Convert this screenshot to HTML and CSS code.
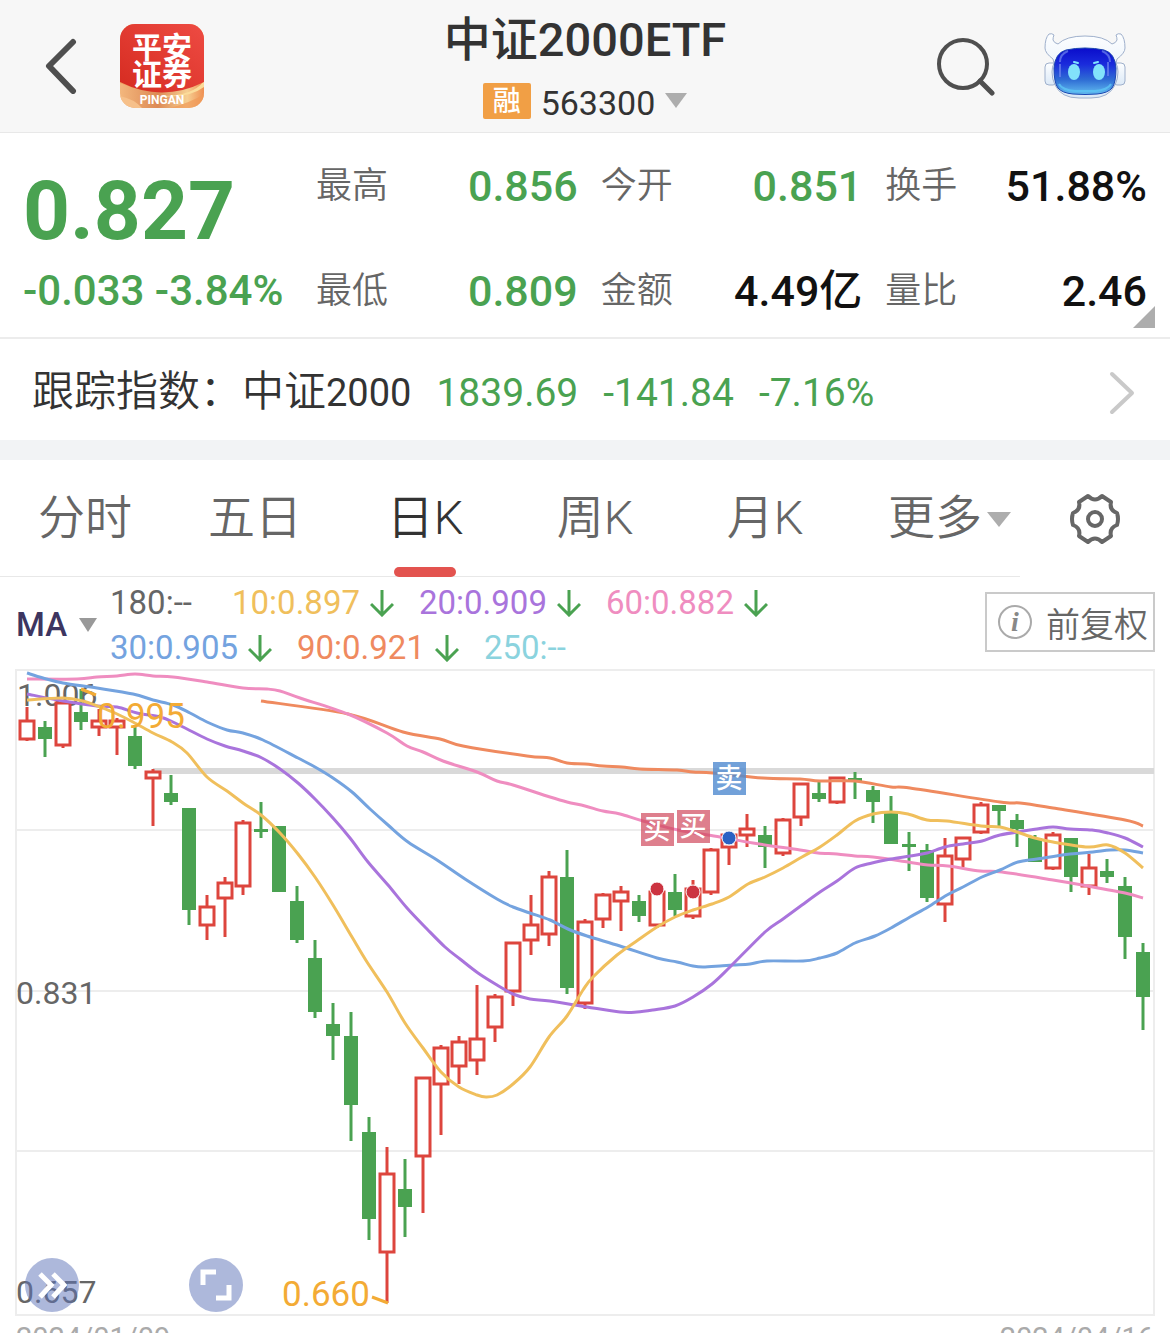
FILE: index.html
```html
<!DOCTYPE html>
<html lang="zh-CN">
<head>
<meta charset="utf-8">
<meta name="viewport" content="width=device-width, initial-scale=1">
<title>中证2000ETF 563300</title>
<link rel="stylesheet" href="styles.css">
</head>
<body>
<header class="topbar">
  <div class="topbar-side">
    <button class="icon-btn back" type="button" aria-label="返回">
      <svg width="34" height="56" viewBox="0 0 34 56"><path d="M29 4 5 28l24 25" fill="none" stroke="#4f4f4f" stroke-width="6" stroke-linecap="round" stroke-linejoin="round"/></svg>
    </button>
    <div class="brand">
      <svg class="brand-art" viewBox="0 0 84 84" aria-hidden="true">
        <defs>
          <linearGradient id="red" x1="0" y1="1" x2="1" y2="0"><stop offset="0" stop-color="#d52b20"/><stop offset="1" stop-color="#ee4b43"/></linearGradient>
          <linearGradient id="gold" x1="0" y1="0" x2="1" y2="0"><stop offset="0" stop-color="#f3b77d"/><stop offset=".45" stop-color="#dd8a55"/><stop offset=".8" stop-color="#f6cf92"/><stop offset="1" stop-color="#ef8f52"/></linearGradient>
        </defs>
        <rect width="84" height="84" fill="url(#gold)"/>
        <path d="M0 59q36 16 84 0v11q-12 8-34 14h34V55H0z" fill="#f09a58" opacity=".7"/>
        <path d="M0 72q14 3 22 12H0z" fill="#f6c08a"/>
        <path d="M84 57q-12 16-46 15 30 3 46-9z" fill="#fbdc9a"/>
        <path d="M0 0h84v58Q42 79 0 58z" fill="url(#red)"/>
      </svg>
      <span class="brand-name">平安<br>证券</span>
      <span class="brand-latin">PINGAN</span>
    </div>
  </div>
  <div class="heading">
    <h1>中证2000ETF</h1>
    <button class="code" type="button"><span class="tag">融</span><span class="code-number">563300</span><i class="caret"></i></button>
  </div>
  <div class="topbar-side topbar-end">
    <button class="icon-btn" type="button" aria-label="搜索">
      <svg width="60" height="60" viewBox="0 0 60 60"><g fill="none" stroke="#4f4f4f" stroke-linecap="round"><circle cx="28" cy="28" r="24" stroke-width="4"/><path d="m45 45 12 12" stroke-width="5"/></g></svg>
    </button>
    <button class="icon-btn" type="button" aria-label="智能助手">
      <svg width="84" height="68" viewBox="0 0 84 68">
        <defs>
          <linearGradient id="face" x1="0" y1="0" x2="0" y2="1"><stop offset="0" stop-color="#0a0ccb"/><stop offset=".35" stop-color="#1a2bdc"/><stop offset=".68" stop-color="#2e6cd4"/><stop offset="1" stop-color="#63bdf0"/></linearGradient>
          <linearGradient id="shell" x1="0" y1="0" x2="0" y2="1"><stop offset="0" stop-color="#fdfeff"/><stop offset="1" stop-color="#dce9f7"/></linearGradient>
        </defs>
        <g stroke="#9fb0cc" stroke-width="1" fill="url(#shell)">
          <rect x="2" y="31" width="12" height="22" rx="4"/>
          <rect x="70" y="31" width="12" height="22" rx="4"/>
          <path d="M15 12Q23 4 42 4t27 8q4-1 5-4 0-3-1-5 2-2 5-1 4 4 4 14 0 5-8 11l-1 4q2 4 2 9 0 7-3 13-6 13-24 13H36q-18 0-24-13-3-6-3-13 0-5 2-9l-1-4Q2 21 2 16 2 6 6 2q3-1 5 1-1 2-1 5 1 3 5 4z"/>
        </g>
        <path d="M23 18q19-4 38 0 11 3 12 18 0 15-4 20-4 5-15 6-12 1-24 0-11-1-15-6-4-5-4-20 1-15 12-18z" fill="url(#face)" stroke="#1a45b0" stroke-width="1"/>
        <path d="M17 30q0-8 8-11M67 30q0-8-8-11M17 32v13M65 30v14" stroke="#6f84ee" stroke-width="2" fill="none" opacity=".7"/>
        <path d="M16 52q3 6 16 7h20q13-1 16-7" stroke="#5cc5f5" stroke-width="2" fill="none" opacity=".8"/>
        <ellipse cx="31" cy="40" rx="6" ry="8" fill="#82e2fb"/><ellipse cx="56" cy="40" rx="6" ry="8" fill="#82e2fb"/>
        <path d="m31 30 4 1M51 31l4-1" stroke="#7fe4ff" stroke-width="2" stroke-linecap="round"/>
      </svg>
    </button>
  </div>
</header>

<main>
  <section class="quote" aria-label="行情">
    <div class="last">
      <strong class="price">0.827</strong>
      <span class="change">-0.033 -3.84%</span>
    </div>
    <dl class="stats">
      <div><dt>最高</dt><dd class="down">0.856</dd></div>
      <div><dt>今开</dt><dd class="down">0.851</dd></div>
      <div><dt>换手</dt><dd>51.88%</dd></div>
      <div><dt>最低</dt><dd class="down">0.809</dd></div>
      <div><dt>金额</dt><dd>4.49亿</dd></div>
      <div><dt>量比</dt><dd>2.46</dd></div>
    </dl>
    <i class="corner"></i>
  </section>

  <a class="index-row" href="#index">
    <span class="index-name">跟踪指数：中证<span class="num">2000</span></span>
    <span class="num down">1839.69</span>
    <span class="num down">-141.84</span>
    <span class="num down">-7.16%</span>
    <svg class="chevron" width="28" height="44" viewBox="0 0 28 44"><path d="m4 3 20 19L4 41" fill="none" stroke="#c9c9c9" stroke-width="4" stroke-linecap="round" stroke-linejoin="round"/></svg>
  </a>

  <nav class="period">
    <div class="tabs">
      <button class="tab" type="button">分时</button>
      <button class="tab" type="button">五日</button>
      <button class="tab active" type="button" aria-current="true">日K</button>
      <button class="tab" type="button">周K</button>
      <button class="tab" type="button">月K</button>
      <button class="tab" type="button"><span class="more">更多<i class="caret"></i></span></button>
    </div>
    <button class="icon-btn settings" type="button" aria-label="设置">
      <svg width="52" height="52" viewBox="0 0 52 52"><g fill="none" stroke="#666" stroke-width="4" stroke-linejoin="round"><path d="M19 3Q26 10 33 3L42 9Q40 17 48 20 50 26 48 32 40 35 42 43L33 49Q26 42 19 49L10 43Q12 35 4 32 2 26 4 20 12 17 10 9z"/><circle cx="26" cy="26" r="7"/></g></svg>
    </button>
  </nav>

  <section class="legend" aria-label="均线">
    <button class="ma" type="button">MA<i class="caret"></i></button>
    <div class="ma-rows">
      <div class="ma-row">
        <span class="ma180">180:--</span>
        <span class="ma10">10:0.897<svg class="arrow" viewBox="0 0 24 28"><path d="M12 1v24M1 15l11 11 11-11"/></svg></span>
        <span class="ma20">20:0.909<svg class="arrow" viewBox="0 0 24 28"><path d="M12 1v24M1 15l11 11 11-11"/></svg></span>
        <span class="ma60">60:0.882<svg class="arrow" viewBox="0 0 24 28"><path d="M12 1v24M1 15l11 11 11-11"/></svg></span>
      </div>
      <div class="ma-row">
        <span class="ma30">30:0.905<svg class="arrow" viewBox="0 0 24 28"><path d="M12 1v24M1 15l11 11 11-11"/></svg></span>
        <span class="ma90">90:0.921<svg class="arrow" viewBox="0 0 24 28"><path d="M12 1v24M1 15l11 11 11-11"/></svg></span>
        <span class="ma250">250:--</span>
      </div>
    </div>
    <button class="adjust" type="button"><span class="info">i</span>前复权</button>
  </section>

  <section class="chart" aria-label="日K线图">
    <svg id="kline" viewBox="0 669 1170 648">
      <g class="grid">
        <rect x="16" y="670" width="1138" height="645"/>
        <path d="M16 830h1138M16 991h1138M16 1151h1138"/>
      </g>
      <g class="axis"><text x="17" y="706">1.006</text><text x="16" y="1004">0.831</text><text x="16" y="1303">0.657</text></g>
      <path class="band" d="M153 771h1001"/>
      <g id="candles"></g>
      <g id="averages"></g>
      <g class="extreme">
        <path d="m81 689 15 6M372 1297l16 6"/>
        <text x="97" y="728">0.995</text><text x="282" y="1306">0.660</text>
      </g>
      <g id="trades"></g>
    </svg>
    <button class="float expand" type="button" aria-label="展开">
      <svg viewBox="0 0 54 54"><path d="m15 16 11 11-11 12M28 16l11 11-11 12"/></svg>
    </button>
    <button class="float full" type="button" aria-label="全屏">
      <svg viewBox="0 0 54 54"><path d="M14 27V14h13M27 40h13V27"/></svg>
    </button>
  </section>
  <div class="dates"><time>2024/01/09</time><time>2024/04/16</time></div>
</main>
<script src="chart.js"></script>
</body>
</html>
```

FILE: styles.css
```css
* { box-sizing: border-box; }

body {
  margin: 0;
  height: 100vh;
  overflow: hidden;
  background: #fff;
  color: #333;
  font-family: Roboto, "Noto Sans CJK SC", sans-serif;
}

button {
  padding: 0;
  border: 0;
  background: none;
  color: inherit;
  font: inherit;
}

svg { display: block; }

.down { color: #4aa251; }

.caret {
  display: inline-block;
  border: 12px solid transparent;
  border-top: 15px solid #adadad;
  border-bottom: 0;
}

/* Top bar */
.topbar {
  display: grid;
  grid-template-columns: 1fr auto 1fr;
  height: 133px;
  background: #f7f7f7;
  border-bottom: 1px solid #e8e8e8;
}
.topbar-side {
  display: flex;
  align-items: center;
  gap: 42px;
  padding: 0 44px;
}
.topbar-end {
  justify-content: flex-end;
  gap: 48px;
  padding-right: 43px;
}
.brand {
  position: relative;
  width: 84px;
  height: 84px;
  border-radius: 15px;
  overflow: hidden;
  color: #fff;
  text-align: center;
}
.brand-art { position: absolute; inset: 0; }
.brand-name {
  position: relative;
  display: block;
  padding-top: 10px;
  font-size: 30px;
  font-weight: 700;
  line-height: 27px;
}
.brand-latin {
  position: relative;
  display: block;
  margin-top: 5px;
  font-size: 12px;
  font-weight: 700;
  line-height: 14px;
}
.heading {
  display: flex;
  flex-direction: column;
  align-items: center;
}
.heading h1 {
  margin: 10px 0 0;
  font-size: 47px;
  font-weight: 500;
  line-height: 60px;
}
.code {
  display: flex;
  align-items: center;
  gap: 10px;
  margin-top: 8px;
  font-size: 34px;
  line-height: 40px;
}
.code-number { padding-top: 5px; }
.code .caret { border-left-width: 11px; border-right-width: 11px; }
.tag {
  width: 48px;
  height: 36px;
  border-radius: 2px;
  background: #f19f45;
  color: #fff;
  font-size: 28px;
  font-weight: 500;
  line-height: 38px;
}

/* Quote */
.quote {
  position: relative;
  display: grid;
  grid-template-columns: 1fr 3fr;
  padding: 28px 23px 21px;
  border-bottom: 2px solid #ececec;
}
.last {
  display: flex;
  flex-direction: column;
  gap: 15px;
  padding-top: 10px;
  color: #4aa251;
  white-space: nowrap;
}
.price { font-size: 82px; font-weight: 700; line-height: 80px; }
.change { font-size: 42px; font-weight: 500; line-height: 50px; }
.stats {
  display: grid;
  grid-template-columns: repeat(3, 1fr);
  gap: 55px 23px;
  margin: 0;
  padding-left: 12px;
}
.stats div {
  display: flex;
  justify-content: space-between;
  line-height: 50px;
}
.stats dt { color: #666; font-size: 36px; font-weight: 350; }
.stats dd { margin: 0; font-size: 43px; font-weight: 500; }
.stats dd:not(.down) { color: #111; }
.corner {
  position: absolute;
  right: 15px;
  bottom: 9px;
  border: 11px solid #adadad;
  border-left-color: transparent;
  border-top-color: transparent;
}

/* Tracked index */
.index-row {
  display: flex;
  align-items: baseline;
  gap: 25px;
  padding: 25px 34px 19px 32px;
  border-bottom: 20px solid #f2f3f5;
  color: #333;
  text-decoration: none;
  font-size: 42px;
  font-weight: 350;
  line-height: 56px;
}
.index-row .num { font-size: 38px; font-weight: 400; }
.index-row .down { color: #4aa251; font-size: 39px; }
.chevron { align-self: center; margin-left: auto; }

/* Period tabs */
.period {
  display: flex;
  height: 117px;
}
.tabs {
  flex: 1;
  display: grid;
  grid-template-columns: repeat(6, 1fr);
  border-bottom: 1px solid #e8e8e8;
}
.tab {
  position: relative;
  padding-bottom: 10px;
  color: #666;
  font-size: 47px;
  font-weight: 350;
}
.active { color: #333; }
.active::after {
  content: "";
  position: absolute;
  left: 50%;
  bottom: -1px;
  width: 62px;
  height: 10px;
  margin-left: -31px;
  border-radius: 5px;
  background: #e3534f;
}
.more { position: relative; }
.more .caret {
  position: absolute;
  left: 100%;
  top: 50%;
  margin: -5px 0 0 5px;
}
.settings {
  display: flex;
  justify-content: center;
  align-items: center;
  width: 150px;
}

/* Moving-average legend */
.legend {
  display: flex;
  padding: 3px 15px 0 16px;
  height: 92px;
}
.ma {
  display: flex;
  align-items: center;
  gap: 12px;
  width: 94px;
  color: #3d3560;
  font-size: 33px;
  font-weight: 500;
}
.ma .caret {
  border-width: 14px 9px 0;
  border-top-color: #999;
}
.ma-rows { font-size: 33px; line-height: 45px; }
.ma-row { display: flex; gap: 25px; }
.ma-row span { display: flex; align-items: center; gap: 10px; }
.arrow {
  width: 24px;
  height: 28px;
  fill: none;
  stroke: #4aa251;
  stroke-width: 3;
}
.ma-row .ma180 { width: 97px; color: #666; }
.ma10 { color: #f0bf5c; }
.ma20 { color: #a974dc; }
.ma60 { color: #ef8dc0; }
.ma30 { color: #74a3df; }
.ma90 { color: #ef8a5f; }
.ma250 { color: #8bd3de; }
.adjust {
  display: flex;
  align-items: center;
  justify-content: space-between;
  width: 170px;
  height: 60px;
  margin: 12px 0 0 auto;
  padding: 0 5px 0 11px;
  border: 2px solid #cacaca;
  color: #666;
  font-size: 34px;
  font-weight: 350;
}
.info {
  width: 34px;
  height: 34px;
  border: 2px solid #aaa;
  border-radius: 50%;
  color: #888;
  font: italic 700 28px/30px "Liberation Serif", serif;
}

/* Chart */
.chart { position: relative; }
#kline { width: 100%; height: auto; }
.grid { fill: none; stroke: #ededed; stroke-width: 2; }
.band { stroke: #d9d9d9; stroke-width: 6; }
.axis { fill: #666; font-size: 32px; }
.extreme { fill: #f3ab35; font-size: 35px; }
.extreme path { stroke: #f3ab35; stroke-width: 3; }
.up { fill: #fff; stroke: #dd453d; stroke-width: 3; }
.fall { fill: #4aa251; stroke: #4aa251; stroke-width: 3; }
.fall rect { stroke: none; }
#averages { fill: none; stroke-width: 3; }
.trade { font-size: 27px; font-weight: 500; fill: #fff; text-anchor: middle; }
.buy .mark { fill: #d0495d; fill-opacity: .7; }
.sell .mark { fill: #4f89d0; fill-opacity: .8; }
.trade circle { stroke: #fff; stroke-width: 1; }
.buy circle { fill: #cc3340; }
.sell circle { fill: #2a62c4; }

.float {
  position: absolute;
  bottom: 5px;
  width: 54px;
  height: 54px;
  border-radius: 50%;
  background: rgba(92, 113, 184, .5);
}
.float svg { fill: none; stroke: #fff; stroke-width: 5; }
.expand { left: 25px; }
.full { left: 189px; }

.dates {
  display: flex;
  justify-content: space-between;
  padding: 0 16px;
  color: #aaa;
  font-size: 29px;
  line-height: 42px;
}
```

FILE: chart.js
```js
// Daily candles, oldest first: [rising, high, body top, body bottom, low] in chart units.
const candles = [
  [1,707,720,741,741],[0,721,727,739,757],[1,701,702,747,748],[0,689,712,722,730],
  [1,709,720,729,736],[1,718,720,729,755],[0,725,736,766,769],[1,769,771,780,826],
  [0,775,793,802,805],[0,808,808,910,925],[1,895,906,927,940],[1,877,882,900,937],
  [1,820,822,888,895],[0,802,829,832,838],[0,826,826,892,892],[0,886,901,940,943],
  [0,940,958,1012,1018],[0,1003,1024,1036,1060],[0,1012,1036,1105,1141],[0,1117,1132,1219,1240],
  [1,1147,1173,1254,1303],[0,1159,1189,1207,1237],[1,1077,1077,1158,1213],[1,1045,1047,1086,1135],
  [1,1036,1041,1068,1084],[1,985,1038,1062,1075],[1,994,996,1029,1042],[1,942,942,993,1006],
  [1,895,924,942,955],[1,871,876,936,946],[0,850,877,988,994],[1,919,921,1005,1009],
  [1,893,894,921,928],[1,886,891,903,931],[0,895,901,916,922],[1,891,891,927,928],
  [0,874,892,910,916],[1,880,888,918,919],[1,848,849,894,895],[1,834,834,849,865],
  [1,814,828,837,847],[0,826,835,847,868],[1,818,819,855,856],[1,783,783,819,826],
  [0,781,793,799,802],[1,777,777,804,804],[0,772,778,781,799],[0,786,790,802,823],
  [0,796,812,844,844],[0,832,844,847,871],[0,844,850,898,902],[1,838,855,906,922],
  [1,837,837,861,867],[1,802,804,834,834],[0,805,805,811,826],[0,814,820,829,847],
  [0,835,838,862,862],[1,832,834,870,870],[0,838,838,877,892],[1,854,867,888,895],
  [0,859,871,877,883],[0,877,886,937,959],[0,943,952,997,1030]
];

const averages = {
  "#ef8a5f": "261,701 348,714 403,732 440,739 463,746 527,756 550,758 567,763 585,764 603,766 622,767 640,769 677,770 693,772 713,773 763,778 800,779 820,781 855,781 891,787 910,788 1000,802 1020,803 1053,808 1125,820 1143,826",
  "#ef8dc0": "27,679 77,679 97,677 117,676 135,674 153,676 173,677 207,682 243,688 267,689 280,691 300,698 348,714 387,733 407,746 423,752 443,761 477,772 497,781 513,785 550,797 567,802 585,806 603,811 620,814 643,821 678,830 720,837 753,843 800,850 818,853 837,854 855,856 873,857 908,862 928,865 948,866 980,871 1002,872 1053,880 1088,886 1125,893 1143,898",
  "#74a3df": "27,673 43,678 63,683 97,688 133,694 153,700 173,705 190,713 207,722 227,730 243,733 263,740 298,758 315,767 333,778 352,792 370,809 388,825 408,842 437,860 465,879 497,899 513,907 530,913 550,920 568,929 587,936 620,946 657,958 677,962 693,966 703,967 720,966 733,965 750,964 767,961 803,961 820,958 837,953 855,943 875,936 891,928 910,917 928,907 947,895 963,887 982,877 1000,870 1018,862 1037,859 1070,854 1093,852 1110,850 1125,850 1143,853",
  "#a974dc": "27,694 63,701 97,706 117,707 137,713 160,717 173,722 187,729 207,739 225,746 243,751 262,758 280,769 298,783 315,799 333,818 350,838 368,862 388,885 407,908 427,929 445,947 460,959 478,973 497,985 513,994 530,999 550,1001 587,1007 620,1012 637,1012 653,1010 675,1006 693,997 712,984 730,967 765,932 783,919 802,905 820,892 837,881 855,868 872,863 891,859 910,856 927,853 945,847 963,844 982,841 1000,835 1037,829 1053,827 1070,829 1092,830 1108,833 1125,838 1143,847",
  "#f0bf5c": "27,700 63,698 83,701 100,707 115,713 133,722 153,733 172,742 187,753 207,777 227,791 243,803 261,815 280,833 298,854 315,877 333,905 352,937 367,962 387,992 405,1023 423,1048 441,1072 459,1087 477,1095 486,1097 497,1095 513,1084 530,1067 549,1037 567,1016 583,990 593,977 617,955 638,940 657,927 675,917 693,910 712,904 729,897 748,884 765,877 783,868 802,857 820,847 837,835 855,821 873,814 891,812 908,814 927,820 947,821 981,826 1000,827 1017,832 1035,838 1053,842 1088,847 1108,845 1125,853 1143,868"
};

const trades = [
  { kind: "buy", label: "买", x: 657, dot: 889, top: 813 },
  { kind: "buy", label: "买", x: 693, dot: 892, top: 810 },
  { kind: "sell", label: "卖", x: 729, dot: 838, top: 762 }
];

// Smooth curve through the points.
function curve(list) {
  const p = list.split(" ").map(s => s.split(",").map(Number));
  let d = `M${p[0]}`;
  for (let i = 0; i < p.length - 1; i++) {
    const a = p[i - 1] || p[i], b = p[i], c = p[i + 1], e = p[i + 2] || c;
    d += `C${b[0] + (c[0] - a[0]) / 6},${b[1] + (c[1] - a[1]) / 6} ${c[0] - (e[0] - b[0]) / 6},${c[1] - (e[1] - b[1]) / 6} ${c}`;
  }
  return d;
}

document.getElementById("candles").innerHTML = candles.map(([rising, high, top, bottom, low], i) => {
  const x = 27 + 18 * i;
  return rising
    ? `<g class="up"><path d="M${x} ${high}V${low}"/><rect x="${x - 7}" y="${top + 1}" width="14" height="${bottom - top - 3}"/></g>`
    : `<g class="fall"><path d="M${x} ${high}V${low}"/><rect x="${x - 7}" y="${top}" width="14" height="${bottom - top}"/></g>`;
}).join("");

document.getElementById("averages").innerHTML = Object.entries(averages)
  .map(([color, points]) => `<path stroke="${color}" d="${curve(points)}"/>`).join("");

document.getElementById("trades").innerHTML = trades.map(t =>
  `<g class="trade ${t.kind}"><circle cx="${t.x}" cy="${t.dot}" r="7"/>` +
  `<rect class="mark" x="${t.x - 16}" y="${t.top}" width="33" height="33"/>` +
  `<text x="${t.x}" y="${t.top + 26}">${t.label}</text></g>`).join("");
```
